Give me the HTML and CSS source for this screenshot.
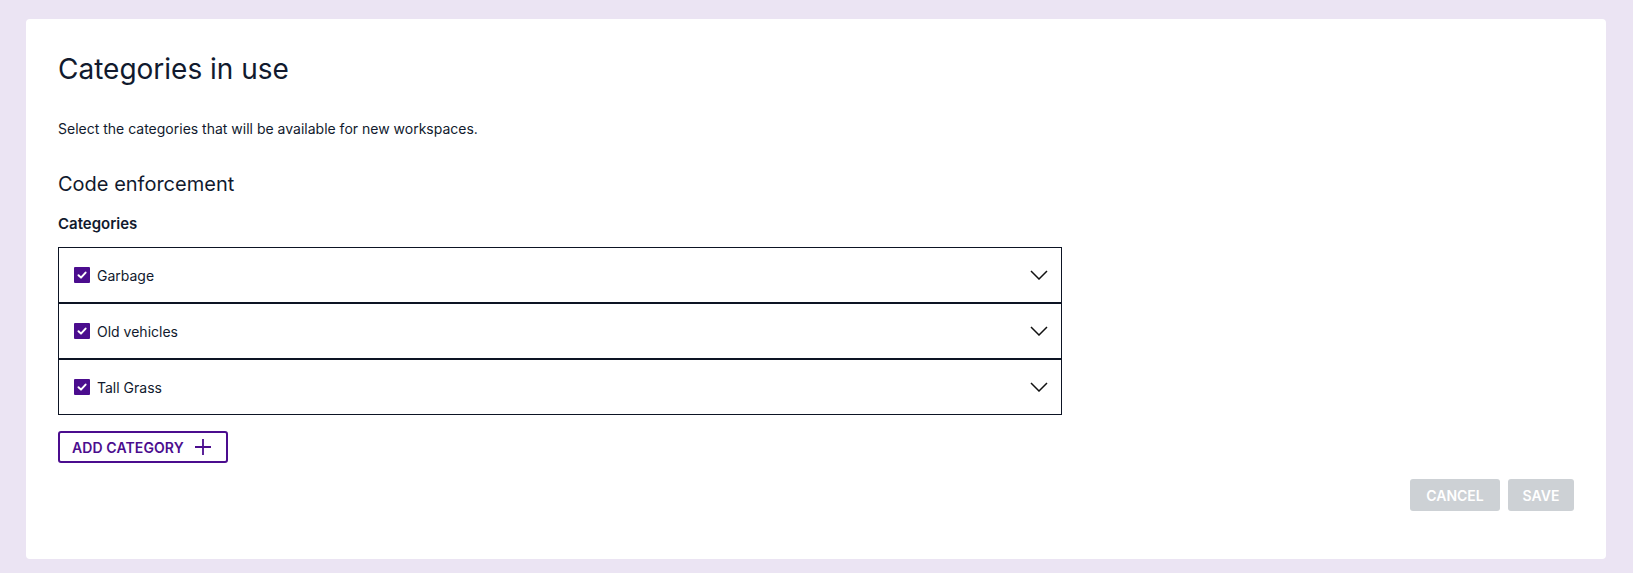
FILE: index.html
```html
<!DOCTYPE html>
<html lang="en">
<head>
<meta charset="utf-8">
<title>Categories in use</title>
<link rel="stylesheet" href="styles.css">
</head>
<body>
<main class="card">
  <h1 class="title">Categories in use</h1>
  <p class="intro">Select the categories that will be available for new workspaces.</p>
  <h2 class="section">Code enforcement</h2>
  <h3 class="label">Categories</h3>
  <ul class="list">
    <li class="row">
      <span class="check"><svg viewBox="0 0 16 16" width="16" height="16"><path d="M4.5 8.2 L7 10.6 L11.6 5.6" fill="none" stroke="#fff" stroke-width="2" stroke-linecap="round" stroke-linejoin="round"/></svg></span>
      <span class="name">Garbage</span>
      <svg class="chev" viewBox="0 0 18 10" width="18" height="10"><path d="M1 1 L9 9 L17 1" fill="none" stroke="#111" stroke-width="1.5"/></svg>
    </li>
    <li class="row">
      <span class="check"><svg viewBox="0 0 16 16" width="16" height="16"><path d="M4.5 8.2 L7 10.6 L11.6 5.6" fill="none" stroke="#fff" stroke-width="2" stroke-linecap="round" stroke-linejoin="round"/></svg></span>
      <span class="name">Old vehicles</span>
      <svg class="chev" viewBox="0 0 18 10" width="18" height="10"><path d="M1 1 L9 9 L17 1" fill="none" stroke="#111" stroke-width="1.5"/></svg>
    </li>
    <li class="row">
      <span class="check"><svg viewBox="0 0 16 16" width="16" height="16"><path d="M4.5 8.2 L7 10.6 L11.6 5.6" fill="none" stroke="#fff" stroke-width="2" stroke-linecap="round" stroke-linejoin="round"/></svg></span>
      <span class="name">Tall Grass</span>
      <svg class="chev" viewBox="0 0 18 10" width="18" height="10"><path d="M1 1 L9 9 L17 1" fill="none" stroke="#111" stroke-width="1.5"/></svg>
    </li>
  </ul>
  <button class="add" type="button"><span>ADD CATEGORY</span><svg viewBox="0 0 18 18" width="18" height="18"><path d="M9 1 V17 M1 9 H17" stroke="currentColor" stroke-width="1.8"/></svg></button>
  <div class="footer">
    <button class="btn btn-cancel" type="button" disabled>CANCEL</button>
    <button class="btn btn-save" type="button" disabled>SAVE</button>
  </div>
</main>
</body>
</html>
```
FILE: styles.css
```css
* { box-sizing: border-box; }
html, body { margin: 0; padding: 0; }
body {
  background: #ebe4f3;
  font-family: Inter, "Noto Sans", sans-serif;
  color: #111a2e;
  padding: 19px 27px 14px 26px;
}
.card {
  background: #fff;
  border-radius: 4px;
  padding: 32px 32px 48px 32px;
  display: flex;
  flex-direction: column;
  height: 540px;
}
.title {
  margin: 0;
  font-size: 28px;
  line-height: 36px;
  font-weight: 400;
}
.intro {
  margin: 32px 0 0;
  font-size: 14px;
  line-height: 20px;
}
.section {
  margin: 31px 0 0;
  font-size: 20px;
  line-height: 28px;
  font-weight: 400;
}
.label {
  margin: 14px 0 0;
  font-size: 15px;
  line-height: 24px;
  font-weight: 600;
}
.list {
  list-style: none;
  margin: 11px 0 0;
  padding: 0;
  width: 1004px;
}
.row {
  display: flex;
  align-items: center;
  height: 56px;
  border: 1px solid #0d1424;
  padding: 0 13px 0 15px;
}
.check {
  width: 16px;
  height: 16px;
  background: #4b0d8e;
  border-radius: 1px;
  display: flex;
}
.name {
  margin-left: 7px;
  font-size: 14px;
  flex: 1;
}
.chev { display: block; }
.add {
  margin-top: 16px;
  align-self: flex-start;
  display: flex;
  align-items: center;
  gap: 10px;
  height: 32px;
  width: 170px;
  padding: 0 0 0 12px;
  border: 2px solid #4b0d8e;
  border-radius: 3px;
  background: #fff;
  color: #4b0d8e;
  font-family: Inter, sans-serif;
  font-size: 14px;
  font-weight: 600;
  letter-spacing: 0.1px;
  white-space: nowrap;
}
.add svg { display: block; }
.footer {
  margin-top: auto;
  display: flex;
  justify-content: flex-end;
  gap: 8px;
}
.btn {
  height: 32px;
  border: none;
  border-radius: 3px;
  background: #cdd1d5;
  color: #fff;
  font-family: Inter, sans-serif;
  font-size: 14px;
  font-weight: 600;
  padding: 0;
  white-space: nowrap;
}
.btn-cancel { width: 90px; }
.btn-save { width: 66px; }
```
